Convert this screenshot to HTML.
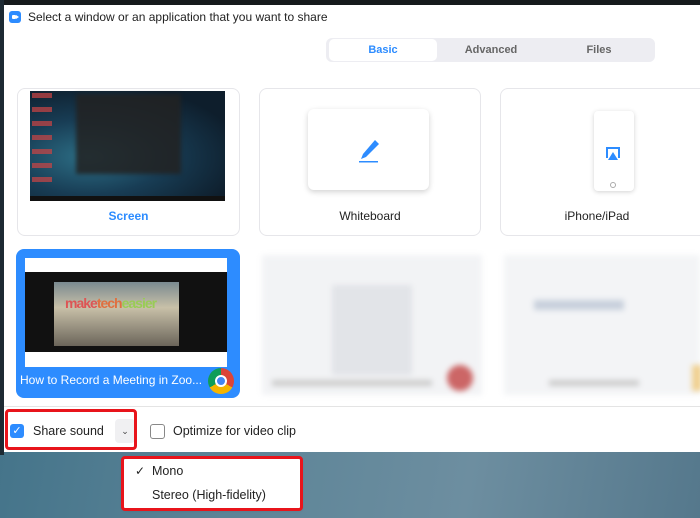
<!DOCTYPE html>
<html><head><style>
*{margin:0;padding:0;box-sizing:border-box}
body{width:700px;height:518px;overflow:hidden;position:relative;font-family:"Liberation Sans",sans-serif;background:linear-gradient(100deg,#3d6f86 0%,#5c8497 40%,#6d8ea0 70%,#55788c 100%)}
.top{position:absolute;left:0;top:0;width:700px;height:6px;background:#151a1c}
.leftb{position:absolute;left:0;top:0;width:4px;height:455px;background:#1d2a33}
.win{position:absolute;left:4px;top:5px;width:696px;height:447px;background:#fff}
.abs{position:absolute}
.card{position:absolute;border:1px solid #e6e6ea;border-radius:8px;background:#fff}
.lbl{position:absolute;width:100%;text-align:center;font-size:12px;color:#222}
.blur{filter:blur(3px)}
</style></head><body>
<div class="top"></div><div class="leftb"></div>
<div class="win">
 <div class="abs" style="left:5px;top:6px;width:12px;height:12px;border-radius:3px;background:#2d8cff"><div style="position:absolute;left:3px;top:4px;width:4px;height:4px;background:#fff;border-radius:1px"></div><div style="position:absolute;left:7px;top:4px;border-left:3px solid #fff;border-top:2px solid transparent;border-bottom:2px solid transparent"></div></div>
 <div class="abs" style="left:24px;top:5px;font-size:12px;color:#222">Select a window or an application that you want to share</div>
 <div class="abs" style="left:322px;top:33px;width:329px;height:24px;background:#ededf2;border-radius:6px"></div>
 <div class="abs" style="left:325px;top:34px;width:108px;height:22px;background:#fff;border-radius:5px;text-align:center;line-height:22px;font-size:11px;font-weight:bold;color:#2d8cff">Basic</div>
 <div class="abs" style="left:433px;top:34px;width:108px;height:22px;text-align:center;line-height:22px;font-size:11px;font-weight:bold;color:#666">Advanced</div>
 <div class="abs" style="left:541px;top:34px;width:108px;height:22px;text-align:center;line-height:22px;font-size:11px;font-weight:bold;color:#666">Files</div>

 <div class="card" style="left:13px;top:83px;width:223px;height:148px">
  <div class="abs" style="left:12px;top:2px;width:195px;height:110px;background:radial-gradient(ellipse at 30% 60%,#2d6f86 0%,#183d55 40%,#0e1e2c 80%)">
   <div class="abs" style="left:46px;top:3px;width:105px;height:80px;background:#222;opacity:.85;filter:blur(2px)"></div>
   <div class="abs" style="left:2px;top:2px;width:20px;height:95px;background:repeating-linear-gradient(#c44 0 5px,transparent 5px 14px);opacity:.7"></div>
   <div class="abs" style="left:0;bottom:0;width:195px;height:5px;background:#111"></div>
  </div>
  <div class="lbl" style="top:120px;color:#2d8cff;font-weight:bold">Screen</div>
 </div>
 <div class="card" style="left:255px;top:83px;width:222px;height:148px">
  <div class="abs" style="left:48px;top:20px;width:121px;height:81px;border-radius:6px;background:#fff;box-shadow:0 2px 6px rgba(0,0,0,.18)">
   <svg class="abs" style="left:48px;top:26px" width="26" height="28" viewBox="0 0 26 28"><path d="M7 19 L5 24 L10 22 L23 9 L19 5 Z" fill="#2d8cff"/><rect x="3" y="26" width="19" height="1.5" fill="#2d8cff"/></svg>
  </div>
  <div class="lbl" style="top:120px">Whiteboard</div>
 </div>
 <div class="card" style="left:496px;top:83px;width:210px;height:148px">
  <div class="abs" style="left:93px;top:22px;width:40px;height:80px;border-radius:4px;background:#fff;box-shadow:0 1px 5px rgba(0,0,0,.18)">
   <div class="abs" style="left:12px;top:36px;width:14px;height:11px;border:2px solid #2d8cff;border-bottom:none"></div>
   <div class="abs" style="left:14px;top:41px;border-bottom:8px solid #2d8cff;border-left:5px solid transparent;border-right:5px solid transparent"></div>
   <div class="abs" style="left:16px;top:71px;width:6px;height:6px;border:1px solid #aaa;border-radius:50%"></div>
  </div>
  <div class="lbl" style="top:120px;left:-8px">iPhone/iPad</div>
 </div>

 <div class="abs" style="left:12px;top:244px;width:224px;height:149px;background:#2d8cff;border-radius:8px">
  <div class="abs" style="left:9px;top:9px;width:202px;height:109px;background:#fff">
   <div class="abs" style="left:0;top:14px;width:202px;height:80px;background:#111"></div>
   <div class="abs" style="left:29px;top:24px;width:125px;height:64px;background:linear-gradient(#7a8a90,#c8c0a8 40%,#6b655a)"></div>
   <div class="abs" style="left:40px;top:37px;font-size:14px;font-weight:bold;color:#d55;letter-spacing:-1px">make<span style="color:#e07040">tech</span><span style="color:#9c5">easier</span></div>
  </div>
  <div class="abs" style="left:4px;top:124px;font-size:12px;color:#fff">How to Record a Meeting in Zoo...</div>
  <div class="abs" style="left:192px;top:119px;width:26px;height:26px;border-radius:50%;background:conic-gradient(#db4437 0 120deg,#f4b400 120deg 240deg,#0f9d58 240deg)"><div style="position:absolute;left:7px;top:7px;width:12px;height:12px;border-radius:50%;background:#4285f4;border:2px solid #fff"></div></div>
 </div>
 <div class="abs blur" style="left:258px;top:250px;width:220px;height:140px;background:#f2f3f5">
  <div class="abs" style="left:70px;top:30px;width:80px;height:90px;background:#e2e4e8"></div>
  <div class="abs" style="left:185px;top:110px;width:26px;height:26px;border-radius:50%;background:#c66"></div>
  <div class="abs" style="left:10px;top:125px;width:160px;height:6px;background:#ccc"></div>
 </div>
 <div class="abs blur" style="left:500px;top:250px;width:196px;height:140px;background:#f3f4f6">
  <div class="abs" style="left:30px;top:45px;width:90px;height:10px;background:#c8d0dc"></div>
  <div class="abs" style="left:45px;top:125px;width:90px;height:6px;background:#ccc"></div>
  <div class="abs" style="left:188px;top:110px;width:10px;height:26px;background:#f0d090"></div>
 </div>
 <div class="abs" style="left:0;top:401px;width:696px;height:1px;background:#e4e4e4"></div>
 <div class="abs" style="left:6px;top:419px;width:14px;height:14px;border-radius:3px;background:#2d8cff;color:#fff;font-size:11px;line-height:14px;text-align:center">✓</div>
 <div class="abs" style="left:29px;top:419px;font-size:12.5px;color:#222">Share sound</div>
 <div class="abs" style="left:111px;top:414px;width:20px;height:24px;background:#f0f0f2;border-radius:4px;text-align:center;line-height:24px;font-size:9px;color:#444">⌄</div>
 <div class="abs" style="left:146px;top:419px;width:15px;height:15px;border:1px solid #888;border-radius:3px"></div>
 <div class="abs" style="left:169px;top:419px;font-size:12.5px;color:#222">Optimize for video clip</div>
</div>
<div class="abs" style="left:5px;top:409px;width:132px;height:41px;border:3px solid #e8141b;border-radius:4px"></div>
<div class="abs" style="left:124px;top:459px;width:176px;height:49px;background:#fff;box-shadow:0 1px 4px rgba(0,0,0,.3)"></div>
<div class="abs" style="left:121px;top:456px;width:182px;height:55px;border:3px solid #e8141b;border-radius:4px"></div>
<div class="abs" style="left:135px;top:464px;font-size:12px;color:#222">✓</div>
<div class="abs" style="left:152px;top:464px;font-size:12.5px;color:#222">Mono</div>
<div class="abs" style="left:152px;top:488px;font-size:12.5px;color:#222">Stereo (High-fidelity)</div>
</body></html>
